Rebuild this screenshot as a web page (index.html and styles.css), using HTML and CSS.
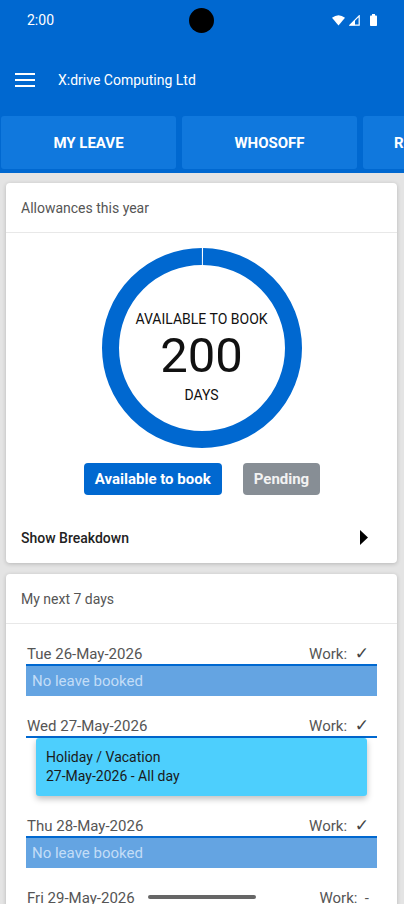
FILE: index.html
```html
<!DOCTYPE html>
<html>
<head>
  <meta charset="UTF-8">
  <title>X:drive Computing Ltd - My Leave</title>
  <link rel="stylesheet" href="styles.css">
</head>
<body>
  <div class="phone">
    <div class="status-bar">
      <span class="clock">2:00</span>
      <span class="camera"></span>
      <span class="status-icons">
        <svg width="13" height="11" viewBox="0 0 13 11"><path d="M0 2.8 Q6.5 -2.4 13 2.8 L6.5 10.5 Z" fill="#fff"/></svg>
        <svg width="11" height="11" viewBox="0 0 11 11"><path d="M10.2 0.8 L10.2 10.2 L0.8 10.2 Z" fill="none" stroke="#fff" stroke-width="1.2"/><path d="M6 5 L6 10.2 L0.8 10.2 Z" fill="#fff"/></svg>
        <svg width="7" height="12" viewBox="0 0 7 12"><rect x="2" y="0" width="3" height="2" fill="#fff"/><rect x="0" y="1.5" width="7" height="10.5" rx="0.8" fill="#fff"/></svg>
      </span>
    </div>

    <div class="app-bar">
      <svg class="menu-icon" width="20" height="14" viewBox="0 0 20 14">
        <rect x="0" y="0" width="20" height="2" fill="#fff"/>
        <rect x="0" y="6" width="20" height="2" fill="#fff"/>
        <rect x="0" y="12" width="20" height="2" fill="#fff"/>
      </svg>
      <span class="app-title">X:drive Computing Ltd</span>
    </div>

    <div class="tabs">
      <div class="tab">MY LEAVE</div>
      <div class="tab">WHOSOFF</div>
      <div class="tab">REQUEST LEAVE</div>
    </div>

    <div class="content">
      <div class="card">
        <div class="card-header">Allowances this year</div>
        <div class="chart-area">
          <div class="donut">
            <svg width="200" height="200" viewBox="0 0 200 200">
              <circle cx="100" cy="100" r="91.5" fill="none" stroke="#0068d0" stroke-width="17"
                      stroke-dasharray="572.9 2" stroke-dashoffset="-1" transform="rotate(-90 100 100)"/>
            </svg>
            <div class="donut-text">
              <div class="donut-label">AVAILABLE TO BOOK</div>
              <div class="donut-value">200</div>
              <div class="donut-label">DAYS</div>
            </div>
          </div>
          <div class="legend">
            <span class="badge badge-blue">Available to book</span>
            <span class="badge badge-grey">Pending</span>
          </div>
        </div>
        <div class="breakdown">
          <span>Show Breakdown</span>
          <svg width="8" height="15" viewBox="0 0 8 15"><path d="M0 0 L8 7.5 L0 15 Z" fill="#000"/></svg>
        </div>
      </div>

      <div class="card">
        <div class="card-header">My next 7 days</div>
        <div class="days">
          <div class="day">
            <div class="day-head"><span>Tue 26-May-2026</span><span>Work: <span class="check">✓</span></span></div>
            <div class="no-leave">No leave booked</div>
          </div>
          <div class="day">
            <div class="day-head"><span>Wed 27-May-2026</span><span>Work: <span class="check">✓</span></span></div>
            <div class="leave-item">
              <div>Holiday / Vacation</div>
              <div>27-May-2026 - All day</div>
            </div>
          </div>
          <div class="day">
            <div class="day-head"><span>Thu 28-May-2026</span><span>Work: <span class="check">✓</span></span></div>
            <div class="no-leave">No leave booked</div>
          </div>
          <div class="day">
            <div class="day-head"><span>Fri 29-May-2026</span><span>Work:&nbsp; -</span></div>
          </div>
        </div>
      </div>
    </div>

    <div class="home-bar"></div>
  </div>
</body>
</html>
```

FILE: styles.css
```css
* { box-sizing: border-box; }
body {
  margin: 0;
  background: #e4e4e4;
  font-family: Roboto, "Noto Sans", Arial, sans-serif;
  overflow: hidden;
}
.phone {
  position: relative;
  width: 404px;
  height: 904px;
  overflow: hidden;
}
.status-bar {
  position: relative;
  height: 40px;
  background: #0068d0;
  color: #fff;
  display: flex;
  align-items: center;
  justify-content: space-between;
  padding: 0 27px 0 27px;
  font-size: 14px;
}
.camera {
  position: absolute;
  left: 189px;
  top: 8px;
  width: 25px;
  height: 25px;
  border-radius: 50%;
  background: #000;
}
.status-icons {
  display: flex;
  align-items: center;
  gap: 4px;
}
.status-icons svg:last-child { margin-left: 6px; }
.app-bar {
  height: 70px;
  background: #0068d0;
  display: flex;
  align-items: center;
  padding-left: 15px;
  padding-top: 9px;
}
.app-title {
  margin-left: 23px;
  color: #fff;
  font-size: 14px;
}
.tabs {
  background: #0068d0;
  display: flex;
  gap: 6px;
  padding: 6px 0 4px 1px;
  overflow: hidden;
}
.tab {
  flex: 0 0 175px;
  height: 53px;
  background: #1078dd;
  border-radius: 3px;
  color: #fff;
  font-weight: bold;
  font-size: 15px;
  white-space: nowrap;
  display: flex;
  align-items: center;
  justify-content: center;
}
.content {
  padding: 10px 7px 0 6px;
}
.card {
  background: #fff;
  border-radius: 4px;
  box-shadow: 0 1px 4px rgba(0,0,0,0.2);
  margin-bottom: 11px;
}
.card-header {
  height: 50px;
  padding: 0 15px;
  display: flex;
  align-items: center;
  font-size: 14px;
  color: #555;
  border-bottom: 1px solid #e8e8e8;
}
.chart-area {
  padding-top: 15px;
  display: flex;
  flex-direction: column;
  align-items: center;
}
.donut {
  position: relative;
  width: 200px;
  height: 200px;
}
.donut svg { display: block; }
.donut-text {
  position: absolute;
  inset: 0;
  display: flex;
  flex-direction: column;
  align-items: center;
  justify-content: center;
  color: #111;
  padding-top: 18px;
}
.donut-label {
  font-size: 14px;
  line-height: 16px;
}
.donut-value {
  font-size: 49px;
  line-height: 56px;
  margin: 1px 0 3px;
}
.legend {
  display: flex;
  gap: 21px;
  margin-top: 15px;
  margin-left: 1px;
}
.badge {
  display: inline-flex;
  align-items: center;
  height: 32px;
  padding: 0 11px;
  border-radius: 4px;
  color: #fff;
  font-weight: bold;
  font-size: 15px;
}
.badge-blue { background: #0068d0; }
.badge-grey { background: #878e95; color: #f2f2f2; }
.breakdown {
  height: 68px;
  display: flex;
  align-items: center;
  justify-content: space-between;
  padding: 18px 29px 0 15px;
  font-size: 14px;
  font-weight: 500;
  color: #222;
}
.breakdown svg { margin-top: -2px; }
.days {
  padding: 21px 20px 0 20px;
}
.day {
  margin-bottom: 21px;
}
.day-head {
  display: flex;
  justify-content: space-between;
  align-items: center;
  height: 21px;
  padding: 0 8px 2px 1px;
  border-bottom: 2px solid #0068d0;
  font-size: 15px;
  color: #555;
}
.check {
  display: inline-block;
  margin-left: 4px;
  font-family: "DejaVu Sans", sans-serif;
  font-size: 17px;
  line-height: 15px;
  color: #444;
}
.no-leave {
  height: 30px;
  background: #64a4e2;
  color: #c3ddf7;
  font-size: 15px;
  display: flex;
  align-items: center;
  padding-left: 6px;
}
.leave-item {
  margin: 0 10px;
  padding: 10px 10px;
  background: #4dcffd;
  border-radius: 3px;
  box-shadow: 0 3px 6px rgba(0,0,0,0.25);
  font-size: 14px;
  line-height: 19px;
  color: #1a1a1a;
}
.home-bar {
  position: absolute;
  left: 148px;
  top: 895px;
  width: 108px;
  height: 4px;
  border-radius: 2px;
  background: #666;
}
```
